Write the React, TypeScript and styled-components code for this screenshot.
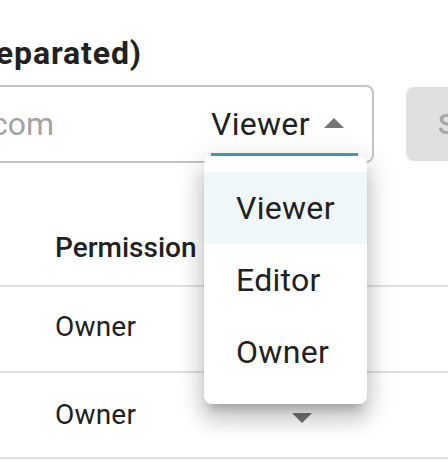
import React from "react";
import styled, { createGlobalStyle } from "styled-components";

const GlobalStyle = createGlobalStyle`
    html, body {
        margin: 0;
        padding: 0;
        background: #ffffff;
        overflow: hidden;
    }
    body {
        font-family: Roboto, "Liberation Sans", Arial, sans-serif;
        color: rgba(0, 0, 0, 0.87);
    }
`;

const TEAL = "#4a9eae";

const ArrowDrop = ({ up }: { up?: boolean }) => (
    <StyledArrowIcon viewBox="0 0 24 24" aria-hidden>
        <path d={up ? "M7 14l5-5 5 5z" : "M7 10l5 5 5-5z"} />
    </StyledArrowIcon>
);

const options = ["Viewer", "Editor", "Owner"];

export default function App() {
    const selected = "Viewer";

    return (
        <>
            <GlobalStyle />
            <StyledPage>
                <StyledTitle>
                    <span>Invite people (comma separated)</span>
                </StyledTitle>

                <StyledFormRow>
                    <StyledInputBox>
                        <StyledPlaceholder>
                            <span>name@example.com</span>
                        </StyledPlaceholder>
                        <StyledSpacer />
                        <StyledSelect>
                            <StyledSelectValue>{selected}</StyledSelectValue>
                            <ArrowDrop up />
                            <StyledMenu>
                                {options.map((opt) => (
                                    <StyledMenuItem
                                        key={opt}
                                        $active={opt === selected}
                                    >
                                        {opt}
                                    </StyledMenuItem>
                                ))}
                            </StyledMenu>
                        </StyledSelect>
                    </StyledInputBox>
                    <StyledButton disabled>Share</StyledButton>
                </StyledFormRow>

                <StyledTable>
                    <StyledHeadRow>
                        <StyledHeadCell>Permission</StyledHeadCell>
                    </StyledHeadRow>
                    <StyledRow>
                        <StyledCell>Owner</StyledCell>
                    </StyledRow>
                    <StyledRow>
                        <StyledCell>
                            <StyledCellSelect>
                                <span>Owner</span>
                                <StyledCellIcon>
                                    <ArrowDrop />
                                </StyledCellIcon>
                            </StyledCellSelect>
                        </StyledCell>
                    </StyledRow>
                </StyledTable>
            </StyledPage>
        </>
    );
}

// ------------------------------------------------------------------ //
// ----------------------------- Style ------------------------------ //
// ------------------------------------------------------------------ //

const StyledPage = styled.div`
    width: 448px;
    height: 462px;
    padding-top: 29px;
    box-sizing: border-box;
    overflow: hidden;
`;

const StyledTitle = styled.div`
    width: 142px;
    display: flex;
    justify-content: flex-end;
    white-space: nowrap;
    font-size: 32px;
    font-weight: 700;
    line-height: 48px;
    letter-spacing: 0.9px;
    color: #212121;
`;

const StyledFormRow = styled.div`
    display: flex;
    align-items: center;
    gap: 32px;
    margin-top: 8px;
`;

const StyledInputBox = styled.div`
    flex: none;
    width: 434px;
    height: 78px;
    margin-left: -60px;
    box-sizing: border-box;
    border: 2px solid #c4c4c4;
    border-radius: 8px;
    display: flex;
    align-items: flex-end;
`;

const StyledPlaceholder = styled.div`
    flex: none;
    width: 112px;
    height: 46px;
    margin-bottom: 14px;
    display: flex;
    justify-content: flex-end;
    white-space: nowrap;
    font-size: 32px;
    line-height: 46px;
    color: #a3a3a3;
`;

const StyledSpacer = styled.div`
    flex: 1;
`;

const StyledSelect = styled.div`
    position: relative;
    flex: none;
    width: 147px;
    height: 46px;
    margin: 0 14px 4px 0;
    padding-bottom: 6px;
    border-bottom: 4px solid ${TEAL};
    display: flex;
    align-items: center;
`;

const StyledSelectValue = styled.div`
    flex: 1;
    font-size: 32px;
    line-height: 46px;
    letter-spacing: 0.3px;
    color: #212121;
`;

const StyledArrowIcon = styled.svg`
    width: 48px;
    height: 48px;
    flex: none;
    fill: #757575;
`;

const StyledMenu = styled.div`
    position: absolute;
    left: -7px;
    top: 55px;
    z-index: 10;
    width: 163px;
    padding: 16px 0;
    background: #ffffff;
    border-radius: 8px;
    box-shadow: 0 10px 10px -6px rgba(0, 0, 0, 0.2),
        0 16px 20px 2px rgba(0, 0, 0, 0.14), 0 6px 28px 4px rgba(0, 0, 0, 0.12);
`;

const StyledMenuItem = styled.div<{ $active?: boolean }>`
    height: 72px;
    padding: 0 32px;
    display: flex;
    align-items: center;
    font-size: 32px;
    letter-spacing: 0.3px;
    color: #212121;
    background: ${({ $active }) => ($active ? "#f0f7f8" : "transparent")};
`;

const StyledButton = styled.button`
    flex: none;
    height: 74px;
    padding: 0 32px;
    border: none;
    border-radius: 8px;
    background: #e0e0e0;
    font-family: Roboto, "Liberation Sans", Arial, sans-serif;
    font-size: 28px;
    font-weight: 500;
    letter-spacing: 0.8px;
    text-transform: uppercase;
    color: #a6a6a6;
`;

const StyledTable = styled.div`
    margin-top: 29px;
    width: 100%;
`;

const StyledHeadRow = styled.div`
    padding: 32px 0 13px 55px;
    border-bottom: 2px solid #e0e0e0;
`;

const StyledHeadCell = styled.div`
    font-size: 28px;
    font-weight: 500;
    line-height: 48px;
    color: #212121;
`;

const StyledRow = styled.div`
    height: 84px;
    box-sizing: content-box;
    padding-left: 55px;
    border-bottom: 2px solid #e0e0e0;
    display: flex;
    align-items: flex-start;
`;

const StyledCell = styled.div`
    width: 271px;
    padding-top: 16px;
    font-size: 28px;
    line-height: 48px;
    letter-spacing: 0.2px;
    color: #212121;
`;

const StyledCellSelect = styled.div`
    display: flex;
    align-items: center;
    justify-content: space-between;
`;

const StyledCellIcon = styled.div`
    display: flex;
    margin-top: 4px;
`;
